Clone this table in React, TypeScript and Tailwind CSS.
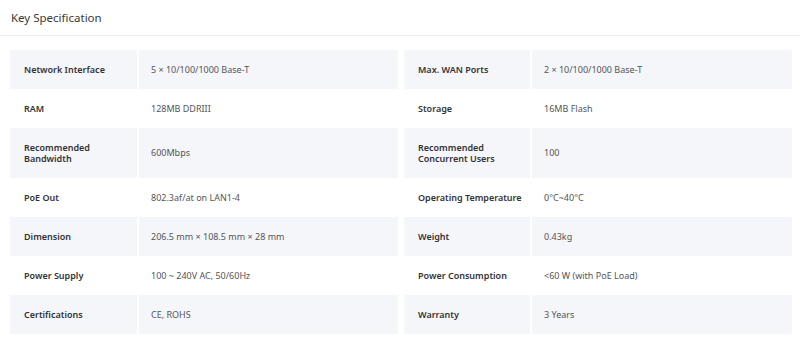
import React from "react";

type Spec = [string, string];

const rows: [Spec, Spec][] = [
  [["Network Interface", "5 × 10/100/1000 Base-T"], ["Max. WAN Ports", "2 × 10/100/1000 Base-T"]],
  [["RAM", "128MB DDRIII"], ["Storage", "16MB Flash"]],
  [["Recommended Bandwidth", "600Mbps"], ["Recommended Concurrent Users", "100"]],
  [["PoE Out", "802.3af/at on LAN1-4"], ["Operating Temperature", "0°C~40°C"]],
  [["Dimension", "206.5 mm × 108.5 mm × 28 mm"], ["Weight", "0.43kg"]],
  [["Power Supply", "100 ~ 240V AC, 50/60Hz"], ["Power Consumption", "<60 W (with PoE Load)"]],
  [["Certifications", "CE, ROHS"], ["Warranty", "3 Years"]],
];

const Half = ({ spec, shaded, labelW }: { spec: Spec; shaded: boolean; labelW: string }) => {
  const bg = shaded ? "bg-[#f5f6fa]" : "bg-white";
  const twoLine = spec[0].startsWith("Recommended");
  return (
    <div className="flex gap-[2px]">
      <div className={`${labelW} ${bg} flex items-center pl-[14px] font-semibold text-[#333] leading-[11.5px]`}>
        <span className={twoLine ? "w-[90px]" : "whitespace-nowrap"}>{spec[0]}</span>
      </div>
      <div className={`flex-1 ${bg} flex items-center pl-[12px] text-[#555]`}>{spec[1]}</div>
    </div>
  );
};

export default function App() {
  return (
    <div className="w-[800px] h-[343px] bg-white overflow-hidden font-['Noto_Sans',sans-serif]">
      <div className="h-[36px] border-b border-[#eeeeee] flex items-center pl-[11px]">
        <h2 className="text-[11.5px] text-[#3a3a3a] font-normal">Key Specification</h2>
      </div>
      <div className="pl-[10px] pr-[8px] pt-[14px] text-[9px]">
        {rows.map((r, i) => (
          <div
            key={i}
            className={`grid grid-cols-2 gap-x-[6px] ${i === 2 ? "h-[50px]" : "h-[39px]"}`}
          >
            <Half spec={r[0]} shaded={i % 2 === 0} labelW="w-[127px]" />
            <Half spec={r[1]} shaded={i % 2 === 0} labelW="w-[126px]" />
          </div>
        ))}
      </div>
    </div>
  );
}
